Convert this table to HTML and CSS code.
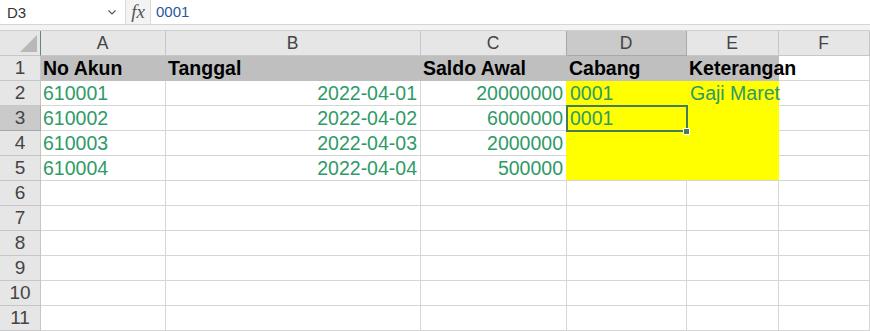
FILE: index.html
```html
<!DOCTYPE html>
<html lang="en">
<head>
  <meta charset="UTF-8" />
  <meta name="viewport" content="width=device-width, initial-scale=1.0"/>
  <title>Rekap Akun</title>
  <link rel="stylesheet" href="styles.css">
</head>
<body>
  <!-- name box + formula bar -->
  <div class="formula-bar">
    <div class="name-box">
      <span>D3</span>
      <svg width="8" height="5" viewBox="0 0 8 5"><polyline points="0.5,0.5 4,4 7.5,0.5" fill="none" stroke="#555" stroke-width="1.2"/></svg>
    </div>
    <div class="fx">fx</div>
    <div class="formula">0001</div>
  </div>
  <div class="strip"></div>

  <div class="sheet">
    <div class="corner"><svg width="17" height="17" viewBox="0 0 17 17"><polygon points="17,0 17,17 0,17" fill="#b8b8b8"/></svg></div>
    <div class="ch">A</div>
    <div class="ch">B</div>
    <div class="ch pre-sel">C</div>
    <div class="ch sel">D</div>
    <div class="ch">E</div>
    <div class="ch">F</div>

    <div class="rh">1</div>
    <div class="hd">No Akun</div>
    <div class="hd">Tanggal</div>
    <div class="hd">Saldo Awal</div>
    <div class="hd">Cabang</div>
    <div class="hd">Keterangan</div>
    <div></div>

    <div class="rh">2</div>
    <div>610001</div>
    <div class="num">2022-04-01</div>
    <div class="num by">20000000</div>
    <div class="y">0001</div>
    <div class="y">Gaji Maret</div>
    <div></div>

    <div class="rh sel">3</div>
    <div>610002</div>
    <div class="num">2022-04-02</div>
    <div class="num by">6000000</div>
    <div class="y active">0001</div>
    <div class="y"></div>
    <div></div>

    <div class="rh">4</div>
    <div>610003</div>
    <div class="num">2022-04-03</div>
    <div class="num by">2000000</div>
    <div class="y"></div>
    <div class="y"></div>
    <div></div>

    <div class="rh">5</div>
    <div>610004</div>
    <div class="num">2022-04-04</div>
    <div class="num by">500000</div>
    <div class="y last"></div>
    <div class="y last"></div>
    <div></div>

    <div class="rh">6</div><div></div><div></div><div></div><div></div><div></div><div></div>
    <div class="rh">7</div><div></div><div></div><div></div><div></div><div></div><div></div>
    <div class="rh">8</div><div></div><div></div><div></div><div></div><div></div><div></div>
    <div class="rh">9</div><div></div><div></div><div></div><div></div><div></div><div></div>
    <div class="rh">10</div><div></div><div></div><div></div><div></div><div></div><div></div>
    <div class="rh">11</div><div></div><div></div><div></div><div></div><div></div><div></div>
  </div>
</body>
</html>
```

FILE: styles.css
```css
body {
  margin: 0;
  font-family: "Liberation Sans", Arial, sans-serif;
  background-color: #fff;
  width: 870px;
  height: 331px;
  overflow: hidden;
}

.formula-bar {
  display: flex;
  height: 24px;
  border-bottom: 1px solid #d5d5d5;
}

.name-box {
  width: 125px;
  box-sizing: border-box;
  display: flex;
  align-items: center;
  justify-content: space-between;
  padding: 0 9px 0 7px;
  font-size: 15px;
  color: #333;
}

.fx {
  width: 26px;
  box-sizing: border-box;
  background-color: #f3f3f3;
  border-left: 1px solid #dadada;
  border-right: 1px solid #dadada;
  font-family: "Liberation Serif", serif;
  font-style: italic;
  font-size: 19px;
  line-height: 23px;
  color: #555;
  text-align: center;
}

.formula {
  padding-left: 5px;
  font-size: 15px;
  line-height: 24px;
  color: #2b579a;
}

.strip {
  height: 5px;
  background-color: #f3f3f3;
}

.sheet {
  display: grid;
  grid-template-columns: 41px 125px 255px 146px 120px 92px 1fr;
  grid-auto-rows: 25px;
  border-top: 1px solid #cfcfcf;
}

.sheet > div {
  box-sizing: border-box;
  border-right: 1px solid #d6d6d6;
  border-bottom: 1px solid #d6d6d6;
  padding: 0 3px 0 2px;
  white-space: nowrap;
  font-size: 19.5px;
  line-height: 24px;
  color: #2f9a68;
}

/* headers */
.sheet > .corner {
  display: flex;
  justify-content: flex-end;
  align-items: flex-end;
  padding: 0 3px 3px 0;
  background-color: #e6e6e6;
  border-right-color: #5f8c6e;
  border-bottom-color: #c6c6c6;
}

.corner svg {
  display: block;
}

.sheet > .ch {
  background-color: #e6e6e6;
  border-color: #c6c6c6;
  text-align: center;
  font-size: 17.5px;
  line-height: 25px;
  color: #444;
}

.sheet > .rh {
  background-color: #e6e6e6;
  border-color: #c6c6c6;
  text-align: center;
  font-size: 19px;
  padding: 0;
  color: #444;
}

.sheet > .sel {
  background-color: #cacaca;
  border-right-color: #a8a8a8;
  border-bottom-color: #a8a8a8;
}

.sheet > .pre-sel {
  border-right-color: #a8a8a8;
}

/* row 1 titles */
.sheet > .hd {
  background-color: #bfbfbf;
  border-color: #bfbfbf;
  font-weight: bold;
  color: #000;
}

.sheet > .num {
  text-align: right;
}

/* yellow block D2:E5 */
.sheet > .y {
  background-color: #ffff00;
  border-color: #ffff00;
  padding-left: 3px;
}

.sheet > .y.last {
  border-bottom-color: #d6d6d6;
}

.sheet > .by {
  border-right-color: #ffff00;
}

/* active cell outline + fill handle */
.active {
  position: relative;
}

.active::after {
  content: "";
  position: absolute;
  left: -1px;
  top: -1px;
  right: -2px;
  bottom: -2px;
  border: 2px solid #477a58;
  z-index: 1;
}

.active::before {
  content: "";
  position: absolute;
  right: -4px;
  bottom: -5px;
  width: 5px;
  height: 5px;
  background-color: #477a58;
  border: 1px solid #fff;
  z-index: 2;
}
```
